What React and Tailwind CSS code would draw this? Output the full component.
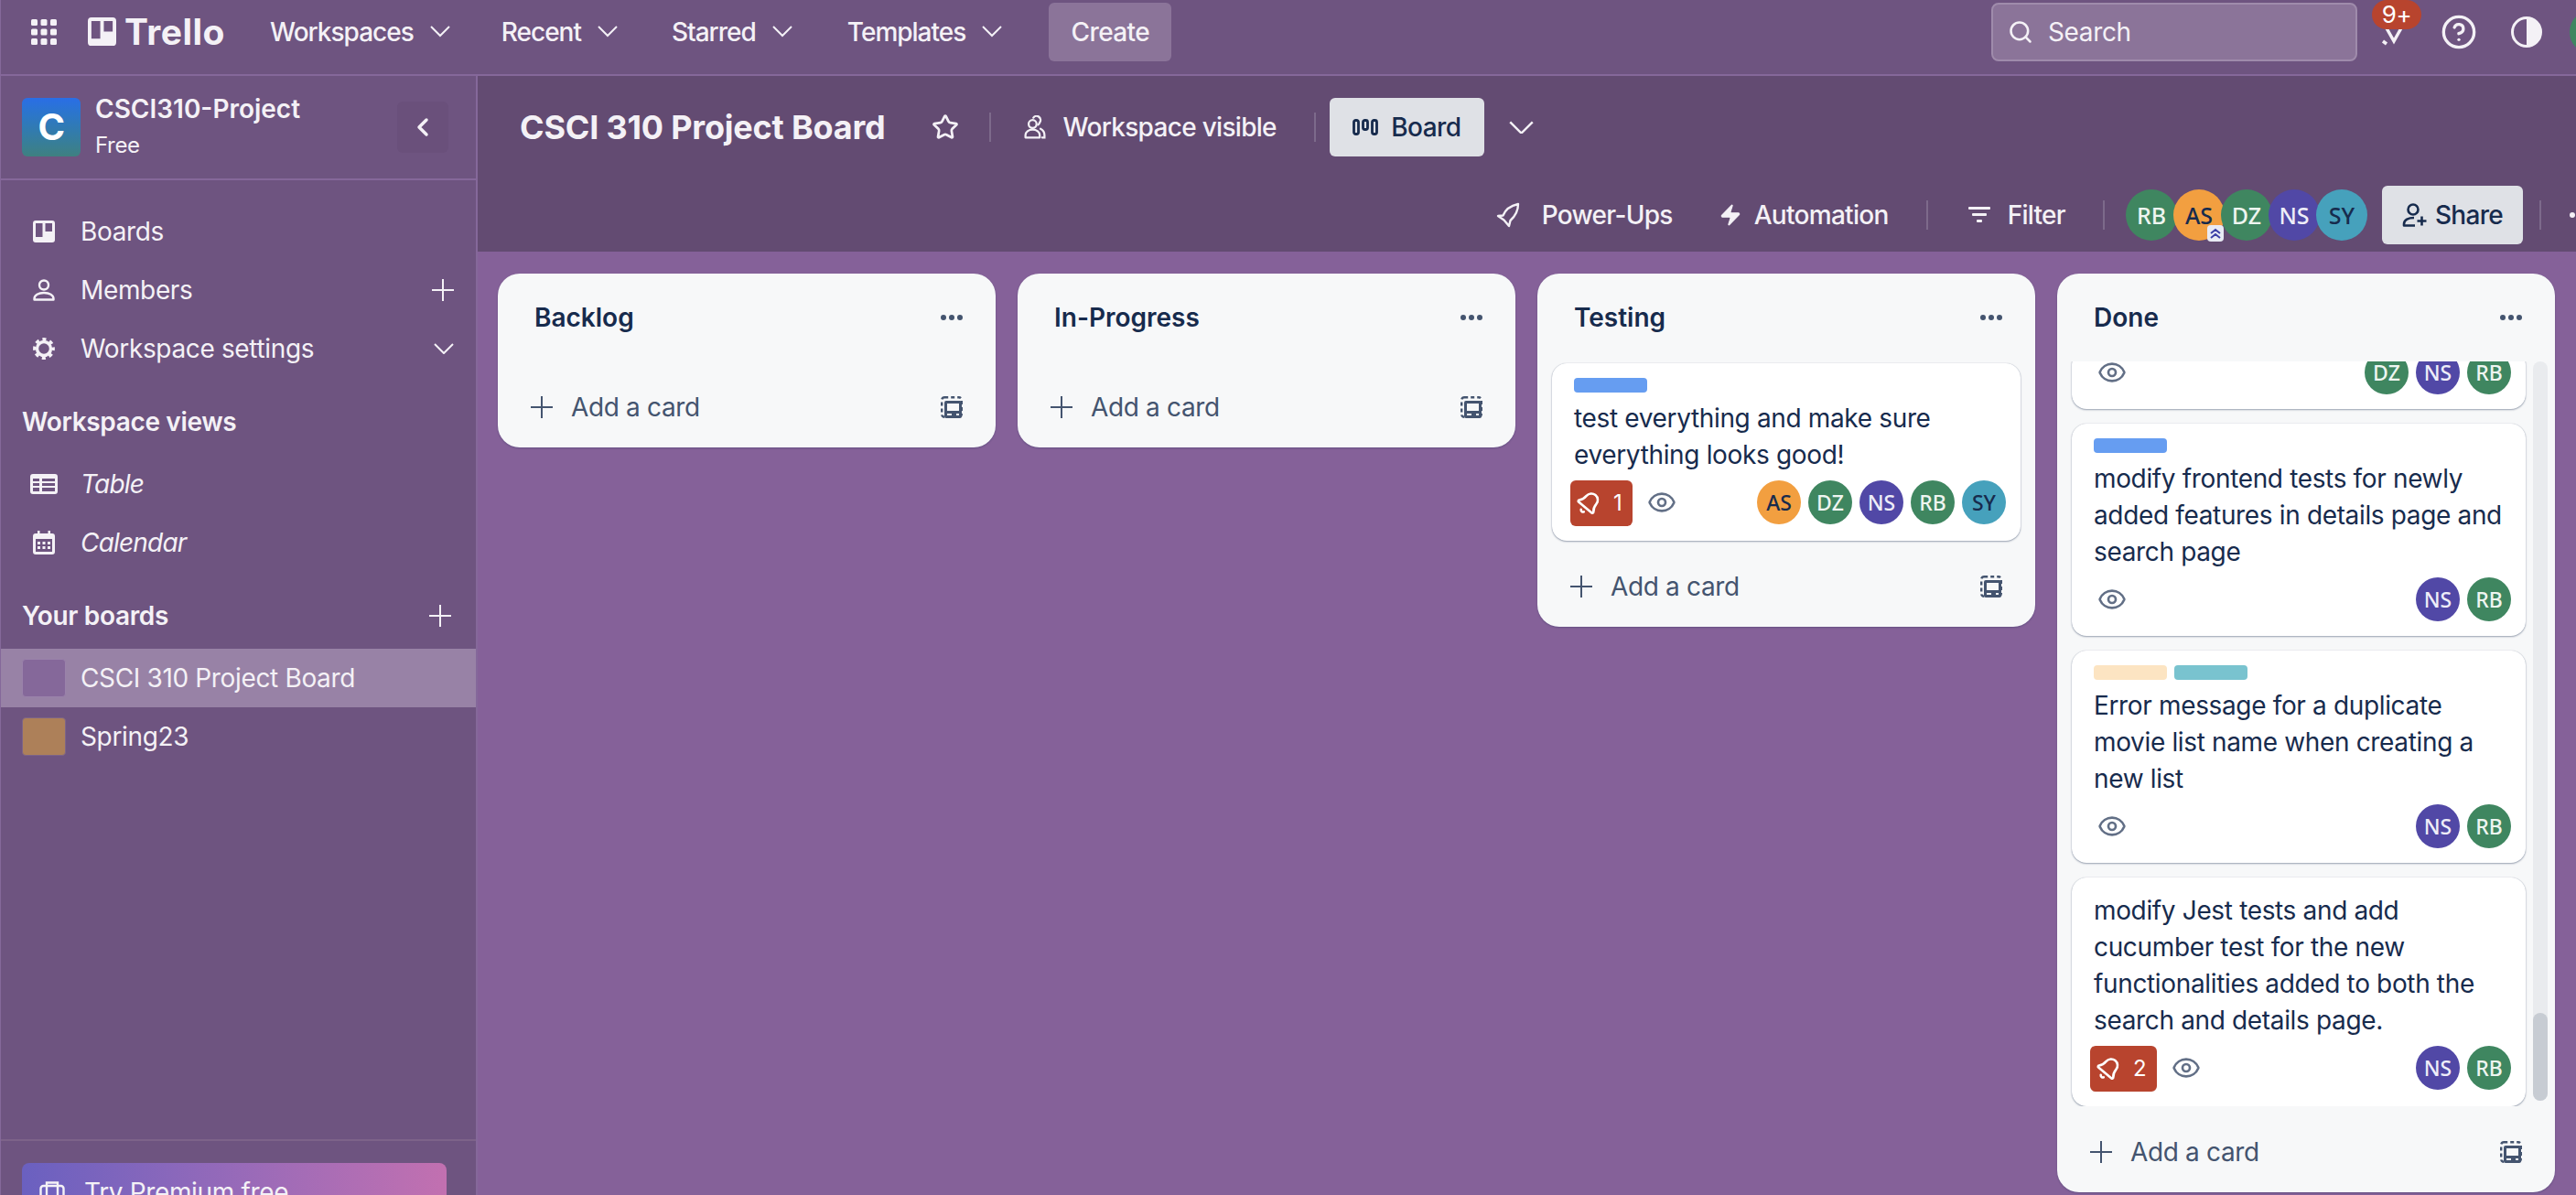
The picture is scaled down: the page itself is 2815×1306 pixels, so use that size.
import React from 'react';
import { ChevronLeft, CircleHelp, Eye, Search, Star, Bell, Zap } from 'lucide-react';

const AVATAR_COLORS = {
  RB: 'bg-[#3f8660] text-[#eef5f0]',
  DZ: 'bg-[#3f8660] text-[#eef5f0]',
  AS: 'bg-[#f29f40] text-[#172b4d]',
  NS: 'bg-[#5148a6] text-[#eeedf8]',
  SY: 'bg-[#46a1bc] text-[#172b4d]',
};

const PlusIcon = ({ className }) => (
  <svg width="24" height="24" viewBox="0 0 24 24" stroke="currentColor" strokeWidth="2" className={`shrink-0 ${className || ''}`}>
    <path d="M12 0v24M0 12h24" />
  </svg>
);

const Chevron = ({ width = 22, className }) => (
  <svg width={width} height={width * 0.55} viewBox="0 0 22 12" fill="none" stroke="currentColor" strokeWidth="2" className={`shrink-0 ${className || ''}`}>
    <path d="M1 1l10 10L21 1" />
  </svg>
);

const GridIcon = () => (
  <svg width="28" height="28" viewBox="0 0 28 28" fill="currentColor" className="shrink-0">
    {[0, 10.5, 21].map((y) =>
      [0, 10.5, 21].map((x) => <rect key={`${x}-${y}`} x={x} y={y} width="7" height="7" rx="1.5" />)
    )}
  </svg>
);

const BoardsIcon = ({ size = 24 }) => (
  <svg width={size} height={size} viewBox="0 0 24 24" className="shrink-0">
    <path
      fill="currentColor"
      fillRule="evenodd"
      d="M3 0h18a3 3 0 0 1 3 3v18a3 3 0 0 1-3 3H3a3 3 0 0 1-3-3V3a3 3 0 0 1 3-3zm0 3v15h7.5V3H3zm10.5 0v9H21V3h-7.5z"
    />
  </svg>
);

const MemberIcon = () => (
  <svg width="24" height="24" viewBox="0 0 24 24" fill="none" stroke="currentColor" strokeWidth="2.4" className="shrink-0">
    <circle cx="12" cy="6.5" r="5" />
    <path d="M1.500 22.500v-1c0-4 4.500-6.500 10.500-6.500s10.500 2.500 10.500 6.500v1z" strokeLinejoin="round" />
  </svg>
);

const GearIcon = () => (
  <svg width="24" height="24" viewBox="0 0 24 24" fill="none" stroke="currentColor" className="shrink-0">
    <circle cx="12" cy="12" r="7.500" strokeWidth="3.400" />
    <circle cx="12" cy="12" r="10.300" strokeWidth="3.200" strokeDasharray="4.100 4" strokeDashoffset="2" />
  </svg>
);

const TableIcon = () => (
  <svg width="30" height="24" viewBox="0 0 30 24" className="shrink-0">
    <path
      fill="currentColor"
      fillRule="evenodd"
      d="M3 1h24a3 3 0 0 1 3 3v16a3 3 0 0 1-3 3H3a3 3 0 0 1-3-3V4a3 3 0 0 1 3-3zm0 5v3h7V6H3zm10 0v3h14V6H13zM3 11v3h7v-3H3zm10 0v3h14v-3H13zM3 16v4h7v-4H3zm10 0v4h14v-4H13z"
    />
  </svg>
);

const CalendarIcon = () => (
  <svg width="24" height="26" viewBox="0 0 24 26" className="shrink-0">
    <path
      fill="currentColor"
      fillRule="evenodd"
      d="M5 0h2.500v3h9V0H19v3h2a3 3 0 0 1 3 3v17a3 3 0 0 1-3 3H3a3 3 0 0 1-3-3V6a3 3 0 0 1 3-3h2V0zM3 9v14h18V9H3z"
    />
    <g fill="currentColor">
      {[5, 10.5, 16].map((x) =>
        [12, 17].map((y) => <rect key={`${x}-${y}`} x={x} y={y} width="3" height="3" />)
      )}
    </g>
  </svg>
);

const WorkspaceIcon = () => (
  <svg width="26" height="26" viewBox="0 2 28 30" fill="none" stroke="currentColor" strokeWidth="2.600" className="shrink-0">
    <circle cx="11" cy="13" r="5" />
    <path d="M2 30v-3c0-4 4-7 9-7s9 3 9 7v3z" strokeLinejoin="round" />
    <path d="M12 5a5 5 0 0 1 8 6 5 5 0 0 1-2 3M21 19c3 1.500 5 4 5 8v3h-3" strokeLinecap="round" />
  </svg>
);

const BoardViewIcon = () => (
  <svg width="28" height="18" viewBox="0 0 28 18" fill="none" stroke="currentColor" strokeWidth="2.800" className="shrink-0">
    <rect x="1.500" y="1.500" width="5" height="15" rx="2" />
    <rect x="11.500" y="1.500" width="5" height="10" rx="2" />
    <rect x="21.500" y="1.500" width="5" height="15" rx="2" />
  </svg>
);

const RocketIcon = () => (
  <svg width="26" height="28" viewBox="0 0 26 28" fill="none" stroke="currentColor" strokeWidth="2.400" strokeLinejoin="round" className="shrink-0">
    <path d="M24 2C15 4 10 8 7.500 14.500L2 15l6.500 4.500L14 26l1.500-6C21 15 24 9 24 2z" />
  </svg>
);

const FilterIcon = () => (
  <svg width="24" height="18" viewBox="0 0 24 18" fill="currentColor" className="shrink-0">
    <rect x="0" y="0" width="24" height="3" rx="1" />
    <rect x="4" y="7" width="16" height="3" rx="1" />
    <rect x="9" y="14" width="6" height="3" rx="1" />
  </svg>
);

const ShareIcon = () => (
  <svg width="28" height="26" viewBox="0 0 28 26" fill="none" stroke="currentColor" strokeWidth="2.600" className="shrink-0">
    <circle cx="12" cy="7" r="5.500" />
    <path d="M13 16c-6 0-11 2-11 7v1.500h12" strokeLinejoin="round" />
    <path d="M21.500 14.500v10M16.500 19.500h10" />
  </svg>
);

const ContrastIcon = () => (
  <svg width="34" height="34" viewBox="0 0 34 34" className="shrink-0">
    <circle cx="17" cy="17" r="15.500" fill="none" stroke="currentColor" strokeWidth="3" />
    <path d="M17 2a15 15 0 0 1 0 30z" fill="currentColor" />
  </svg>
);

const NotifyIcon = () => (
  <svg width="34" height="34" viewBox="0 0 34 34" fill="none" stroke="currentColor" strokeWidth="3.500" className="shrink-0">
    <path d="M3 4l13 23 14-25M4 27l4 3" />
  </svg>
);

const BriefcaseIcon = () => (
  <svg width="28" height="28" viewBox="0 0 28 28" fill="none" stroke="currentColor" strokeWidth="2.400" className="shrink-0">
    <rect x="1.500" y="7" width="25" height="19" rx="3" />
    <path d="M8 7V3.500h12V7M8 7v19M20 7v19" />
  </svg>
);

const TemplateIcon = () => (
  <svg width="24" height="24" viewBox="0 0 24 24" className="shrink-0 text-[#44546f]">
    <rect x="1.200" y="1.200" width="21.600" height="21.600" rx="3" fill="none" stroke="currentColor" strokeWidth="2.400" strokeDasharray="4 3" />
    <path fill="currentColor" fillRule="evenodd" d="M6 5h15a2 2 0 0 1 2 2v15a2 2 0 0 1-2 2H6a2 2 0 0 1-2-2V7a2 2 0 0 1 2-2zm1 3v8h13V8H7zm0 11v2h5v-2H7zm10 0v2h3v-2h-3z" />
  </svg>
);

const DotsIcon = () => (
  <svg width="24" height="8" viewBox="0 0 24 8" fill="currentColor" className="shrink-0">
    <circle cx="3" cy="4" r="3" />
    <circle cx="12" cy="4" r="3" />
    <circle cx="21" cy="4" r="3" />
  </svg>
);

const TopMenu = ({ label, className }) => (
  <div className={`flex items-center font-medium tracking-[-1px] ${className}`}>
    <span>{label}</span>
    <Chevron className="ml-[18px]" />
  </div>
);

const SideRow = ({ icon, label, right, italic }) => (
  <div className="flex h-16 items-center pl-[35px] pr-6">
    <div className="flex w-[52px] items-center">{icon}</div>
    <span className={italic ? 'italic tracking-[-0.8px]' : ''}>{label}</span>
    {right && <div className="ml-auto">{right}</div>}
  </div>
);

const Avatar = ({ initials, size = 'card' }) => (
  <div
    className={`relative flex shrink-0 items-center justify-center rounded-full font-['Noto_Sans',sans-serif] font-medium tracking-normal ${AVATAR_COLORS[initials]} ${
      size === 'card' ? 'h-12 w-12 text-[23px]' : 'h-14 w-14 text-[25px] -ml-1 first:ml-0'
    }`}
  >
    {initials}
    {initials === 'AS' && size !== 'card' && (
      <div className="absolute -bottom-[1px] right-[1px] flex h-[18px] w-[18px] items-center justify-center rounded bg-[#e8eaf4]">
        <svg width="14" height="14" viewBox="0 0 14 14" fill="none" stroke="#3b3fa6" strokeWidth="2">
          <path d="M2 7l5-4 5 4M2 12l5-4 5 4" />
        </svg>
      </div>
    )}
  </div>
);

const Card = ({ labels = [], lines = [], badge, members, clipped }) => (
  <div className={`rounded-2xl bg-white pb-4 shadow-[0_1px_2px_#091e4260,0_0_1px_#091e424f] ${clipped ? '-mt-3' : 'pt-4'}`}>
    {labels.length > 0 && (
      <div className="mb-2 flex gap-2 pl-6">
        {labels.map((color) => (
          <div key={color} className={`h-4 w-20 rounded ${color}`} />
        ))}
      </div>
    )}
    {lines.length > 0 && (
      <div className="mb-2 px-6 text-[#172b4d]">
        {lines.map((line) => (
          <div key={line} className="whitespace-nowrap">{line}</div>
        ))}
      </div>
    )}
    <div className="flex items-start pl-5 pr-4">
      {badge ? (
        <div className="mr-4 flex h-[50px] items-center gap-[13px] rounded-md bg-[#b8442e] pl-[6px] pr-3 text-2xl text-white">
          <Bell size={28} strokeWidth={2.200} className="rotate-[40deg]" />
          <span>{badge}</span>
        </div>
      ) : (
        <div className="w-2" />
      )}
      <Eye size={32} strokeWidth={2} className="mt-2 text-[#626f86]" />
      <div className="ml-auto flex gap-2">
        {members.map((m) => (
          <Avatar key={m} initials={m} />
        ))}
      </div>
    </div>
  </div>
);

const ListHeader = ({ title }) => (
  <div className="flex h-24 shrink-0 items-center pl-10 pr-9 text-[#172b4d]">
    <span className="font-semibold tracking-normal">{title}</span>
    <div className="ml-auto text-[#44546f]"><DotsIcon /></div>
  </div>
);

const ListFooter = () => (
  <div className="mt-[6px] flex h-[88px] shrink-0 items-center pl-9 pr-9 text-[#44546f]">
    <PlusIcon className="mr-5" />
    <span>Add a card</span>
    <div className="ml-auto"><TemplateIcon /></div>
  </div>
);

const List = ({ title, children }) => (
  <div className="flex w-[544px] shrink-0 flex-col rounded-3xl bg-[#f7f8f9] shadow-[0_1px_2px_#091e4240]">
    <ListHeader title={title} />
    {children}
    <ListFooter />
  </div>
);

const Divider = ({ className }) => <div className={`h-8 w-[2px] shrink-0 bg-[#7d6a8b] ${className}`} />;

export default function App() {
  return (
    <div className="flex h-screen w-full flex-col overflow-hidden border-l border-[#85689a] bg-[#856199] font-['Inter',sans-serif] text-[28px] leading-10 tracking-[-0.35px] text-[#f4f1f6]">
      {/* top bar */}
      <header className="flex h-[83px] shrink-0 items-center border-b-2 border-[#85689a] bg-[#6e5480] pb-3 pl-[33px]">
        <GridIcon />
        <div className="ml-[34px] flex w-[150px] items-center">
          <BoardsIcon size={31} />
          <span className="ml-[9px] text-[39px] font-bold tracking-[0.5px]">Trello</span>
        </div>
        <TopMenu label="Workspaces" className="ml-[49px]" />
        <TopMenu label="Recent" className="ml-[56px]" />
        <TopMenu label="Starred" className="ml-[59px]" />
        <TopMenu label="Templates" className="ml-[60px]" />
        <div className="ml-[51px] flex h-16 w-[134px] items-center justify-center rounded-md bg-[#8b7499] font-medium tracking-[-0.6px]">Create</div>
        <div className="ml-auto flex h-16 w-[400px] items-center rounded-lg border-2 border-[#9f8bab] bg-[#8b7499] pl-[16px]">
          <Search size={28} strokeWidth={2.200} />
          <span className="ml-4">Search</span>
        </div>
        <div className="relative ml-[24px]">
          <NotifyIcon />
          <div className="absolute -left-2 -top-[18px] flex h-[32px] w-[54px] items-center justify-center rounded-full bg-[#b8442e] text-[26px] text-white">9+</div>
        </div>
        <CircleHelp size={40} strokeWidth={2} className="ml-[33px]" />
        <div className="ml-[37px]"><ContrastIcon /></div>
        <div className="ml-[30px] -mr-[41px] h-12 w-12 shrink-0 rounded-full bg-[#3f8660]" />
      </header>

      <div className="flex min-h-0 flex-1">
        {/* sidebar */}
        <aside className="flex w-[521px] shrink-0 flex-col border-r-2 border-[#85689a] bg-[#6e5480]">
          <div className="flex h-[114px] shrink-0 items-center border-b-2 border-[#85689a] pl-[23px]">
            <div className="flex h-16 w-16 items-center justify-center rounded-md bg-gradient-to-b from-[#2a6ee6] to-[#3f8080] text-[40px] font-bold text-white">C</div>
            <div className="ml-4 -mt-1">
              <div className="font-semibold tracking-normal">CSCI310-Project</div>
              <div className="mt-1 text-2xl leading-8">Free</div>
            </div>
            <div className="ml-auto mr-[30px] flex h-14 w-14 items-center justify-center rounded-md bg-[#6a507b]">
              <ChevronLeft size={32} strokeWidth={2.600} />
            </div>
          </div>
          <nav className="min-h-0 flex-1 pt-6">
            <SideRow icon={<BoardsIcon />} label="Boards" />
            <SideRow icon={<MemberIcon />} label="Members" right={<PlusIcon />} />
            <SideRow icon={<GearIcon />} label="Workspace settings" right={<Chevron />} />
            <div className="mb-3 mt-6 flex h-12 items-center pl-[23px] font-semibold">Workspace views</div>
            <SideRow icon={<div className="-ml-[3px]"><TableIcon /></div>} label="Table" italic />
            <SideRow icon={<CalendarIcon />} label="Calendar" italic />
            <div className="mb-3 mt-6 flex h-12 items-center pl-[23px] pr-[27px] font-semibold">
              <span>Your boards</span>
              <PlusIcon className="ml-auto" />
            </div>
            <div className="flex h-16 items-center bg-[#9882a6] pl-[23px]">
              <div className="h-[42px] w-12 rounded-[4px] border border-[#9a82ab] bg-[#85689a]" />
              <span className="ml-4">CSCI 310 Project Board</span>
            </div>
            <div className="flex h-16 items-center pl-[23px]">
              <div className="h-[42px] w-12 rounded-[4px] border border-[#7c6488] bg-[#ad8059]" />
              <span className="ml-4">Spring23</span>
            </div>
          </nav>
          <div className="h-[61px] shrink-0 overflow-hidden border-t-2 border-[#7d6389] pl-[23px] pt-6">
            <div className="flex h-16 w-[464px] items-center rounded-lg bg-gradient-to-r from-[#6a60c0] to-[#c270b0] pl-[19px]">
              <BriefcaseIcon />
              <span className="ml-[21px]">Try Premium free</span>
            </div>
          </div>
        </aside>

        <main className="flex min-w-0 flex-1 flex-col">
          {/* board header */}
          <div className="flex h-48 shrink-0 flex-col bg-[#634b72] pt-6">
            <div className="flex h-16 items-center pl-[46px]">
              <h1 className="text-4xl font-bold tracking-[-0.2px]">CSCI 310 Project Board</h1>
              <Star size={30} strokeWidth={2.200} className="ml-[50px]" />
              <Divider className="ml-[33px]" />
              <div className="ml-[35px]"><WorkspaceIcon /></div>
              <span className="ml-[18px] font-medium tracking-[-0.7px]">Workspace visible</span>
              <Divider className="ml-[41px]" />
              <div className="ml-[15px] flex h-16 w-[169px] items-center justify-center gap-[14px] rounded-md bg-[#dfe1e6] font-medium tracking-[-0.6px] text-[#172b4d]">
                <BoardViewIcon />
                <span>Board</span>
              </div>
              <Chevron width={27} className="ml-[27px]" />
            </div>
            <div className="mt-8 flex h-16 items-center justify-end font-medium tracking-[-0.7px]">
              <RocketIcon />
              <span className="ml-6">Power-Ups</span>
              <Zap size={26} fill="currentColor" strokeWidth={1} className="ml-[50px]" />
              <span className="ml-[13px]">Automation</span>
              <Divider className="ml-[41px]" />
              <div className="ml-[44px]"><FilterIcon /></div>
              <span className="ml-[19px]">Filter</span>
              <Divider className="ml-[41px]" />
              <div className="ml-[23px] flex">
                {['RB', 'AS', 'DZ', 'NS', 'SY'].map((m) => (
                  <Avatar key={m} initials={m} size="head" />
                ))}
              </div>
              <div className="ml-4 flex h-16 w-[154px] items-center justify-center gap-2 rounded-md bg-[#dfe1e6] text-[#172b4d]">
                <ShareIcon />
                <span>Share</span>
              </div>
              <Divider className="ml-[18px]" />
              <div className="ml-[31px] -mr-[17px]"><DotsIcon /></div>
            </div>
          </div>

          {/* lists */}
          <div className="flex min-h-0 flex-1 items-start gap-6 pl-[22px] pt-6">
            <List title="Backlog" />
            <List title="In-Progress" />
            <List title="Testing">
              <div className="px-4 pt-[2px]">
                <Card
                  labels={['bg-[#669df1]']}
                  lines={['test everything and make sure', 'everything looks good!']}
                  badge="1"
                  members={['AS', 'DZ', 'NS', 'RB', 'SY']}
                />
              </div>
            </List>
            <List title="Done">
              <div className="flex h-[814px] gap-2 overflow-hidden pl-4">
                <div className="flex w-[496px] shrink-0 flex-col gap-4">
                  <Card clipped members={['DZ', 'NS', 'RB']} />
                  <Card
                    labels={['bg-[#669df1]']}
                    lines={['modify frontend tests for newly', 'added features in details page and', 'search page']}
                    members={['NS', 'RB']}
                  />
                  <Card
                    labels={['bg-[#fce4c2]', 'bg-[#79c3cf]']}
                    lines={['Error message for a duplicate', 'movie list name when creating a', 'new list']}
                    members={['NS', 'RB']}
                  />
                  <Card
                    lines={['modify Jest tests and add', 'cucumber test for the new', 'functionalities added to both the', 'search and details page.']}
                    badge="2"
                    members={['NS', 'RB']}
                  />
                </div>
                <div className="flex h-[808px] w-4 shrink-0 flex-col justify-end rounded-full bg-[#e9ebee]">
                  <div className="h-24 rounded-full bg-[#c7ccd3]" />
                </div>
              </div>
            </List>
          </div>
        </main>
      </div>
    </div>
  );
}
